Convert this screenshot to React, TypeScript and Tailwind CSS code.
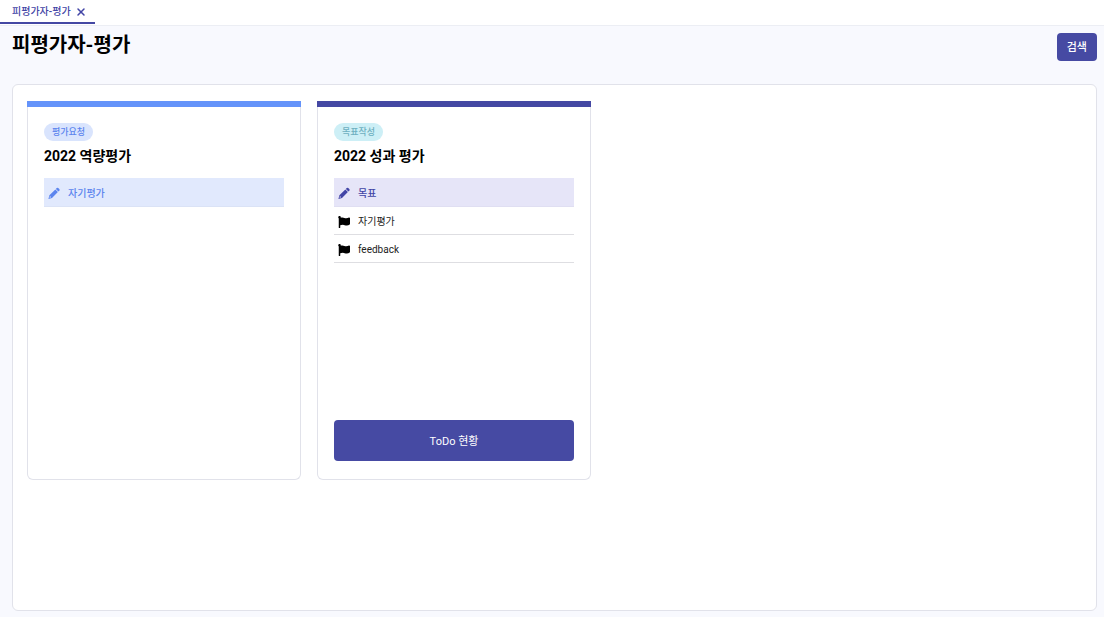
import { FaFlag } from "react-icons/fa";
import { X } from "lucide-react";

type Tone = "blue" | "indigo";

type Evaluation = {
  title: string;
  status: string;
  tone: Tone;
  current: string;
  upcoming: string[];
  action?: string;
};

const evaluations: Evaluation[] = [
  { title: "2022 역량평가", status: "평가요청", tone: "blue", current: "자기평가", upcoming: [] },
  {
    title: "2022 성과 평가",
    status: "목표작성",
    tone: "indigo",
    current: "목표",
    upcoming: ["자기평가", "feedback"],
    action: "ToDo 현황",
  },
];

const tones: Record<Tone, { bar: string; badge: string; step: string }> = {
  blue: {
    bar: "bg-[#6493fa]",
    badge: "bg-[#d9e4fd] text-[#5c85ee]",
    step: "border-[#dbe3f6] bg-[#e1e9fd] text-[#5c85ee]",
  },
  indigo: {
    bar: "bg-[#4448a3]",
    badge: "bg-[#cdeff6] text-[#6db0c0]",
    step: "border-[#e0dff2] bg-[#e6e5f8] text-[#4245a6]",
  },
};

function PencilIcon() {
  return (
    <svg viewBox="0 0 24 24" className="size-3" fill="currentColor" aria-hidden="true">
      <path d="M17.4 2.2a2.2 2.2 0 0 1 3.1 0l2 2a2.2 2.2 0 0 1 0 3.1l-1.7 1.7-5.1-5.1z" />
      <path
        fillRule="evenodd"
        d="M14.7 4.9l5.1 5.1L8 21.8 0.8 23.8l2-7.2zM3.9 18.2l-.8 3.3 3.3-.9z"
      />
    </svg>
  );
}

function EvaluationCard({ item }: { item: Evaluation }) {
  const tone = tones[item.tone];
  return (
    <article className="flex min-h-[379px] flex-col rounded-b-md">
      <div className={`h-1.5 ${tone.bar}`} />
      <div className="flex flex-1 flex-col items-stretch rounded-b-md border border-t-0 border-[#e1e2ea] px-4 pt-4 pb-[18px]">
        <span className={`flex h-[18px] items-center self-start rounded-full px-2 pt-0.5 text-[9px] font-medium ${tone.badge}`}>
          {item.status}
        </span>
        <h2 className="mt-[5px] text-sm leading-5 font-bold text-black">{item.title}</h2>
        <ul className="mt-3 text-[10px] text-[#222]">
          <li className={`flex h-[29px] items-center gap-2 border-b pt-0.5 pl-1 font-medium ${tone.step}`}>
            <PencilIcon />
            {item.current}
          </li>
          {item.upcoming.map((step) => (
            <li key={step} className="flex h-7 items-center gap-2 border-b border-[#dedee2] pt-0.5 pl-1">
              <FaFlag className="size-3 text-black" aria-hidden="true" />
              {step}
            </li>
          ))}
        </ul>
        {item.action && (
          <button type="button" className="mt-auto h-[41px] rounded bg-[#464aa3] pt-1 text-[11px] text-white">
            {item.action}
          </button>
        )}
      </div>
    </article>
  );
}

export default function App() {
  return (
    <div className="flex min-h-screen flex-col bg-[#f8f9fe] font-[Roboto,'Noto_Sans_CJK_KR',sans-serif]">
      <nav className="flex h-[26px] items-start border-b border-[#eceef4] bg-white">
        <div className="flex h-6 items-center gap-1 border-b-2 border-[#4448a3] pr-2 pl-3 text-[10px] font-medium text-[#4245a6]">
          <a href="#evaluation">피평가자-평가</a>
          <button type="button" aria-label="탭 닫기" className="pt-0.5">
            <X className="size-3" strokeWidth={3} />
          </button>
        </div>
      </nav>
      <header className="flex items-start justify-between pt-[7px] pr-[7px] pl-3">
        <h1 className="text-xl leading-6 font-bold text-black">피평가자-평가</h1>
        <button type="button" className="h-7 rounded bg-[#464aa3] px-2.5 pt-0.5 text-[11px] font-medium text-white">
          검색
        </button>
      </header>
      <main className="mt-[23px] mr-[7px] mb-1.5 ml-3 flex-1 rounded-md border border-[#e1e2ea] bg-white px-3.5 py-4">
        <div className="grid grid-cols-[repeat(auto-fill,274px)] gap-4">
          {evaluations.map((item) => (
            <EvaluationCard key={item.title} item={item} />
          ))}
        </div>
      </main>
    </div>
  );
}
